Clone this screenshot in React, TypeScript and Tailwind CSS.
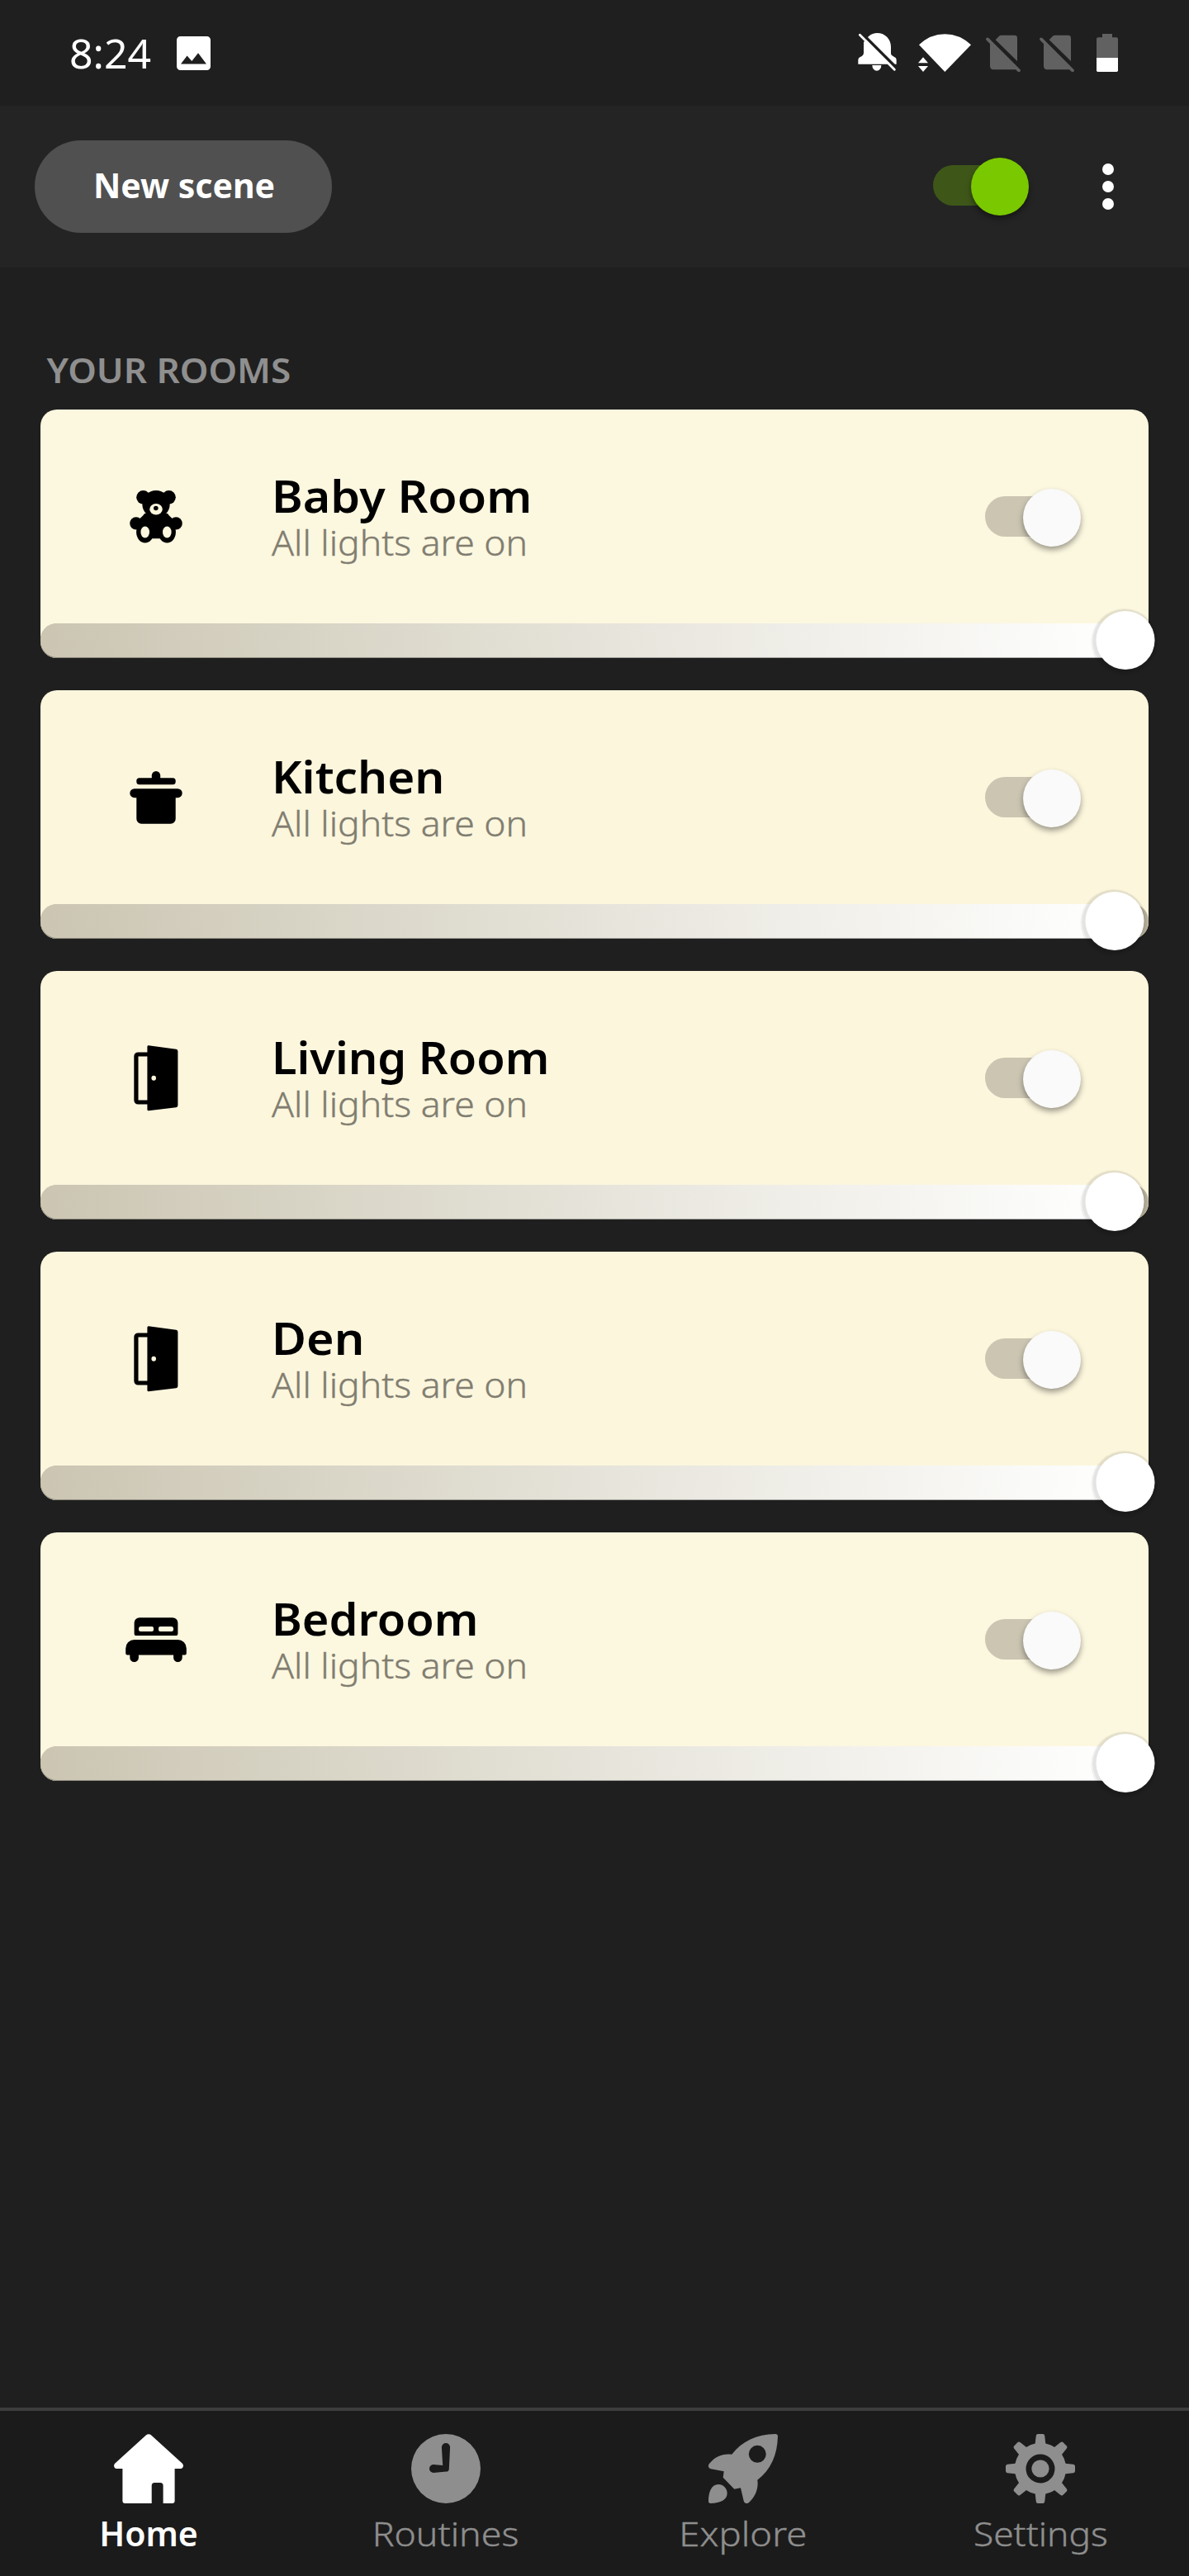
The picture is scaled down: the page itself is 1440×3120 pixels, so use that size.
import type { ReactNode } from "react"
import clsx from "clsx"

type Room = {
  name: string
  icon: ReactNode
  cardClass: string
  nameClass: string
  // distance from the left edge of the track to the middle of the thumb
  level: number
}

type Tab = {
  label: string
  icon: ReactNode
  labelClass: string
  active?: boolean
}

function BearIcon() {
  return (
    <svg viewBox="-8 -8 80 80" className="size-20">
      <circle cx="16.5" cy="8.3" r="8.3" />
      <circle cx="47.5" cy="8.3" r="8.3" />
      <ellipse cx="32" cy="16.6" rx="16.7" ry="16.7" />
      <path d="M18 28C15 33 9 35 8 40L14 58.3H50L56 40C55 35 49 33 46 28Z" />
      <circle cx="7.8" cy="39.8" r="7.6" />
      <circle cx="56.2" cy="39.8" r="7.6" />
      <ellipse cx="18.7" cy="50.5" rx="10.6" ry="13" />
      <ellipse cx="45.3" cy="50.5" rx="10.6" ry="13" />
      <g fill="#fcf7df">
        <ellipse cx="32" cy="22.7" rx="7.8" ry="6.8" />
        <ellipse cx="18.7" cy="50.5" rx="5.3" ry="6.9" />
        <ellipse cx="45.3" cy="50.5" rx="5.3" ry="6.9" />
      </g>
      <circle cx="31.8" cy="21.5" r="2.8" />
    </svg>
  )
}

function PotIcon() {
  return (
    <svg viewBox="-8 -8 80 80" className="size-20">
      <path d="M26.8 10V5.2a5.2 5.2 0 0 1 10.4 0V10Z" />
      <rect x="8.3" y="8.3" width="47.4" height="8" rx="3.5" />
      <rect x="0.3" y="21.2" width="63.4" height="11" rx="5.5" />
      <path d="M8.3 28H55.7V57.7a6 6 0 0 1-6 6H14.3a6 6 0 0 1-6-6Z" />
    </svg>
  )
}

function DoorIcon() {
  return (
    <svg viewBox="-8 0 80 80" className="size-20">
      <path d="M23 11H10.3a2.4 2.4 0 0 0-2.4 2.4V66.6a2.4 2.4 0 0 0 2.4 2.4H23" fill="none" stroke="#000" strokeWidth="5.2" />
      <path
        fillRule="evenodd"
        d="M23 0.3 56.3 4.8A2.4 2.4 0 0 1 58.4 7.2V72.8A2.4 2.4 0 0 1 56.3 75.2L23 79.3A1.5 1.5 0 0 1 21.4 77.8V1.8A1.5 1.5 0 0 1 23 0.3ZM29.2 36.8a2.8 3 0 1 0 0 6 2.8 3 0 1 0 0-6Z"
      />
    </svg>
  )
}

function BedIcon() {
  return (
    <svg viewBox="0 0 80 80" className="size-20">
      <path
        fillRule="evenodd"
        d="M20 13.2H60a6.4 6.4 0 0 1 6.4 6.4V32.5a2.6 2.6 0 0 1-2.6 2.6H16.2a2.6 2.6 0 0 1-2.6-2.6V19.6A6.4 6.4 0 0 1 20 13.2ZM21.5 24a2.5 2.5 0 0 0-2.5 2.5v1A2.5 2.5 0 0 0 21.5 30H35a2 2 0 0 0 2-2V26a2 2 0 0 0-2-2ZM45 24a2 2 0 0 0-2 2v2a2 2 0 0 0 2 2H58.5a2.5 2.5 0 0 0 2.5-2.5v-1A2.5 2.5 0 0 0 58.5 24Z"
      />
      <path d="M13.6 40H66.4A10.4 10.4 0 0 1 76.8 50.4V56.5a2 2 0 0 1-2 2H71.7V61.7a5.3 5.3 0 0 1-10.6 0V58.5H18.9V61.7a5.3 5.3 0 0 1-10.6 0V58.5H5.2a2 2 0 0 1-2-2V50.4A10.4 10.4 0 0 1 13.6 40Z" />
    </svg>
  )
}

function HomeIcon() {
  return (
    <svg viewBox="0 0 84 84" className="size-21" fill="currentColor">
      <path d="M38.8 1.6a4.4 4.4 0 0 1 6.4 0L82.6 35.4C85.2 38 83.8 42 80.6 42H73.6V81a3 3 0 0 1-3 3H59.6V62.5a3.5 3.5 0 0 0-3.5-3.5H49.2a3.5 3.5 0 0 0-3.5 3.5V84H13.4a3 3 0 0 1-3-3V42H3.4C.2 42-1.2 38 1.4 35.4Z" />
    </svg>
  )
}

function ClockIcon() {
  return (
    <svg viewBox="0 0 84 84" className="size-21" fill="currentColor">
      <path
        fillRule="evenodd"
        d="M42 0a42 42 0 1 0 0 84 42 42 0 1 0 0-84ZM36.9 16a5.1 5.1 0 0 1 10.2 0L45.8 42.4a3.4 3.4 0 0 1-3.2 3.2L27 47a5 5 0 1 1 0-10L38.2 38Z"
      />
    </svg>
  )
}

function RocketIcon() {
  return (
    <svg viewBox="0 0 84 84" className="size-21" fill="currentColor">
      <path
        fillRule="evenodd"
        d="M81 0A2.8 2.8 0 0 1 84 3C83.4 25 76 43 59.3 55.7C61 66 56.5 76.5 49 83C46.5 85 43.4 84 42.7 81L39 65.3 31.3 66.7 17.7 52.7 18.7 45.3 3 42.3C0 41.6-1 38.5 1 36C8 27.3 17 23.3 28.3 24.7C41 8.5 58 .5 81 0ZM59.3 13.8a10.5 10.5 0 1 0 0 21 10.5 10.5 0 1 0 0-21Z"
      />
      <path d="M12 61a10.7 10.7 0 0 1 10.7 10.7C22.5 80 15 83.2 2.6 84A2.5 2.5 0 0 1 0 81.4C.2 69 4 61.3 12 61Z" />
    </svg>
  )
}

const GEAR_ANGLES = [0, 45, 90, 135, 180, 225, 270, 315]

function GearIcon() {
  return (
    <svg viewBox="0 0 84 84" className="size-21" fill="currentColor">
      {GEAR_ANGLES.map((angle) => (
        <path
          key={angle}
          transform={`rotate(${angle} 42 42)`}
          d="M39 0H45A2.4 2.4 0 0 1 47.2 2.1L48.6 14H35.4L36.8 2.1A2.4 2.4 0 0 1 39 0Z"
        />
      ))}
      <circle cx="42" cy="42" r="24.3" fill="none" stroke="currentColor" strokeWidth="13.6" />
      <circle cx="42" cy="42" r="10.6" />
    </svg>
  )
}

function PictureIcon() {
  return (
    <svg viewBox="0 0 41 41" className="size-[41px]" fill="#fff">
      <path
        fillRule="evenodd"
        d="M4.5 0H36.5A4.5 4.5 0 0 1 41 4.5V36.5A4.5 4.5 0 0 1 36.5 41H4.5A4.5 4.5 0 0 1 0 36.5V4.5A4.5 4.5 0 0 1 4.5 0ZM5 33.5H36L26 20.3 18.3 30 12.6 23.5Z"
      />
    </svg>
  )
}

function MutedBellIcon() {
  return (
    <svg viewBox="117 117 141 144" className="h-12 w-[47px]" fill="#fff">
      <path d="M187 120C217 120 237 143 237 170V196Q239 204 248 206Q257 209 257 219V233H118V219Q118 209 127 206Q137 203 138 192V148L150 138 157 131Q170 120 187 120Z" />
      <path d="M169 237H202A16.5 20 0 0 1 169 237Z" />
      <path d="M122 112 265 255" stroke="#1f1f1f" strokeWidth="11" />
      <path d="M117 117H134L150 141 138 153V145Z" fill="#1f1f1f" />
      <path d="M124 127 250 253" stroke="#fff" strokeWidth="8.5" strokeLinecap="round" />
    </svg>
  )
}

function WifiIcon() {
  return (
    <svg viewBox="336 117 192 144" className="ml-[26px] h-12 w-16" fill="#fff">
      <path d="M433 261 339 163Q380 124 433 124T528 163Z" />
      <path d="M336 229H372L354 208ZM336 240H372L354 261Z" />
    </svg>
  )
}

function NoSimIcon({ className }: { className: string }) {
  return (
    <svg viewBox="582 117 126 144" className={clsx("h-12 w-[42px]", className)}>
      <path d="M617 145 630 131Q634 128 638 128H686Q696 128 696 138V222ZM597 157 694 253H609Q597 252 597 240Z" fill="#616161" />
      <path d="M588 142 702 256" stroke="#616161" strokeWidth="11" strokeLinecap="round" />
    </svg>
  )
}

function BatteryIcon() {
  return (
    <svg viewBox="984 117 78 144" className="ml-[27px] h-12 w-[26px]">
      <path d="M984 210V142Q984 136 990 136H1005V123H1041V136H1056Q1062 136 1062 142V210Z" fill="#616161" />
      <path d="M984 210H1062V256Q1062 261 1057 261H989Q984 261 984 256Z" fill="#fff" />
    </svg>
  )
}

const ROOMS: Room[] = [
  { name: "Baby Room", icon: <BearIcon />, cardClass: "bg-[#fcf7df]", nameClass: "scale-x-[1.043]", level: 1314 },
  { name: "Kitchen", icon: <PotIcon />, cardClass: "bg-[#fcf6dd]", nameClass: "scale-x-[1.029]", level: 1301 },
  { name: "Living Room", icon: <DoorIcon />, cardClass: "bg-[#fcf6dd]", nameClass: "scale-x-[1.016]", level: 1301 },
  { name: "Den", icon: <DoorIcon />, cardClass: "bg-[#fcf6dd]", nameClass: "scale-x-[1.045]", level: 1314 },
  { name: "Bedroom", icon: <BedIcon />, cardClass: "bg-[#fcf7df]", nameClass: "scale-x-[1.017]", level: 1314 },
]

const TABS: Tab[] = [
  { label: "Home", icon: <HomeIcon />, labelClass: "font-semibold", active: true },
  { label: "Routines", icon: <ClockIcon />, labelClass: "font-light scale-x-[1.09] [-webkit-text-stroke:0.4px]" },
  { label: "Explore", icon: <RocketIcon />, labelClass: "font-light scale-x-[1.11] [-webkit-text-stroke:0.4px]" },
  { label: "Settings", icon: <GearIcon />, labelClass: "font-light scale-x-[1.08] [-webkit-text-stroke:0.4px]" },
]

function Toggle({ trackClass, thumbClass }: { trackClass: string; thumbClass: string }) {
  return (
    <button type="button" role="switch" aria-checked="true" className="flex items-center">
      <span className={clsx("h-[49px] w-20 rounded-l-full", trackClass)} />
      <span className={clsx("mt-[3px] -ml-[34px] size-[70px] rounded-full", thumbClass)} />
    </button>
  )
}

function RoomCard({ room }: { room: Room }) {
  return (
    <li className={clsx("flex h-[301px] flex-col rounded-[20px]", room.cardClass)}>
      <div className="flex h-[259px] items-center">
        <div className="flex w-[280px] justify-center">{room.icon}</div>
        <div className="mt-[3px] flex flex-1 flex-col items-start">
          <h2 className={clsx("origin-left text-[55px] leading-[59px] font-semibold text-black", room.nameClass)}>
            {room.name}
          </h2>
          <p className="origin-left scale-x-[1.034] text-[43px] leading-[56px] font-light text-[#807d70] [-webkit-text-stroke:0.4px]">
            All lights are on
          </p>
        </div>
        <div className="mr-[82px]">
          <Toggle trackClass="bg-[#cbc5b2]" thumbClass="bg-[#fafafa] shadow-[0_4px_7px_rgba(0,0,0,0.38)]" />
        </div>
      </div>
      <div className="relative h-[42px] rounded-[20px] bg-[#b9b39e]">
        <div
          className="h-full rounded-l-[20px] bg-linear-to-r from-[#cbc5b2] via-[#e5e3d9] to-white shadow-[inset_0_-1px_0_rgba(0,0,0,0.3)]"
          style={{ width: room.level }}
        />
        <span
          className="absolute top-[-15px] size-[71px] -translate-x-1/2 rounded-full bg-white shadow-[-1px_1px_0_3px_rgba(0,0,0,0.05),-1px_2px_0_5px_rgba(0,0,0,0.05)]"
          style={{ left: room.level }}
        />
      </div>
    </li>
  )
}

export default function App() {
  return (
    <div className="flex h-[3120px] w-[1440px] flex-col overflow-hidden bg-[#1f1f1f] font-['Noto_Sans',sans-serif]">
      <div className="flex h-32 items-center pr-[86px] pl-[84px]">
        <span className="w-[130px] text-[50px] leading-[60px] text-white">8:24</span>
        <PictureIcon />
        <div className="mb-[2px] ml-auto flex">
          <MutedBellIcon />
          <WifiIcon />
          <NoSimIcon className="ml-[18px]" />
          <NoSimIcon className="ml-[23px]" />
          <BatteryIcon />
        </div>
      </div>

      <header className="flex h-[196px] items-center bg-[#242424] pr-[91px] pl-[42px]">
        <button type="button" className="h-28 w-[360px] rounded-full bg-[#505050] pb-[3px] pl-[2px] text-[41px] font-bold text-white">
          New scene
        </button>
        <div className="-mt-[3px] mr-[89px] ml-auto">
          <Toggle trackClass="bg-[#3e5719]" thumbClass="bg-[#7ac800] shadow-[0_4px_7px_rgba(0,0,0,0.4)]" />
        </div>
        <button type="button" aria-label="More" className="flex flex-col gap-[7px]">
          <span className="size-3.5 rounded-full bg-white" />
          <span className="size-3.5 rounded-full bg-white" />
          <span className="size-3.5 rounded-full bg-white" />
        </button>
      </header>

      <main className="flex-1 px-[49px] pt-[94px]">
        <h1 className="origin-left scale-x-[1.074] pl-[7px] text-[41px] leading-[60px] font-semibold text-[#8f8f8f]">YOUR ROOMS</h1>
        <ul className="mt-[18px] flex flex-col gap-[39px]">
          {ROOMS.map((room) => (
            <RoomCard key={room.name} room={room} />
          ))}
        </ul>
      </main>

      <nav aria-label="Main navigation" className="grid h-[204px] grid-cols-4 border-t-4 border-[#3d3d3d] bg-[#1b1b1b] pt-7">
        {TABS.map((tab) => (
          <a
            key={tab.label}
            aria-current={tab.active ? "page" : undefined}
            className={clsx("flex flex-col items-center", tab.active ? "text-white" : "text-[#8e8e8e]")}
          >
            {tab.icon}
            <span className={clsx("mt-2 text-[41px] leading-[56px]", tab.labelClass)}>{tab.label}</span>
          </a>
        ))}
      </nav>
    </div>
  )
}
